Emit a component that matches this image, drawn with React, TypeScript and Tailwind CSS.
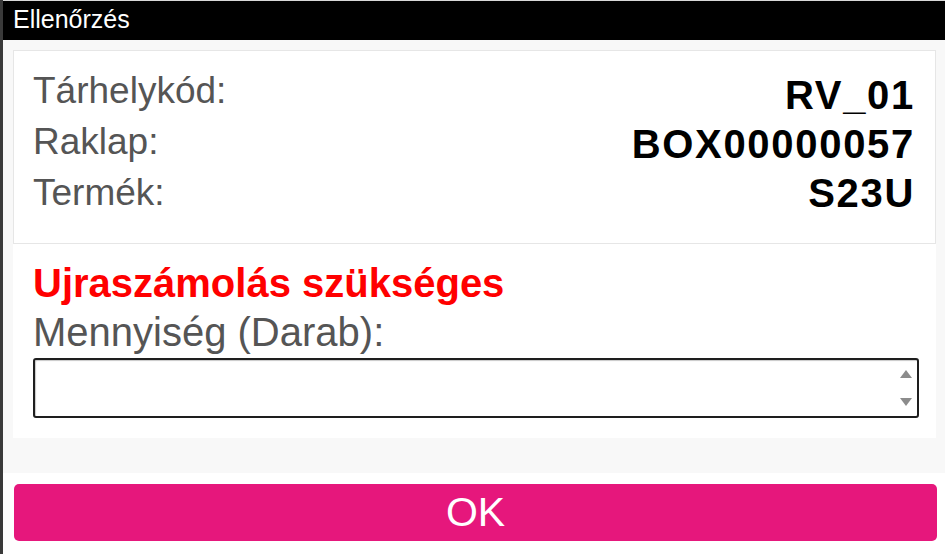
import React from "react";

export default function App() {
  const font = { fontFamily: '"Liberation Sans", Arial, sans-serif' };
  return (
    <div
      className="w-[945px] h-[554px] bg-white flex flex-col border-l-[3px] border-[#3a3a3a] overflow-hidden"
      style={font}
    >
      <div className="h-[1px] bg-[#d8d8d8]" />
      <div className="h-[39px] bg-black text-white pl-[10px] flex items-center text-[25px] leading-none pb-[2px]">
        Ellenőrzés
      </div>
      <div className="bg-[#f8f8f8] pt-[10px] pl-[10px] pr-[9px] pb-[35px] flex flex-col">
        <div className="bg-white border border-[#e6e6e6] flex items-end justify-between pt-[14px] pb-[25px] pl-[19px] pr-[20px]">
          <div className="flex flex-col text-[37px] leading-[51px] text-[#555555]">
            <span>Tárhelykód:</span>
            <span>Raklap:</span>
            <span>Termék:</span>
          </div>
          <div className="flex flex-col items-end text-[40px] leading-[49px] font-bold text-black tracking-[1.7px]">
            <span>RV_01</span>
            <span>BOX00000057</span>
            <span>S23U</span>
          </div>
        </div>
        <div className="bg-white pt-[15px] pb-[20px] pl-[20px] pr-[17px] flex flex-col">
          <div className="text-[40px] leading-[48px] font-bold text-[#ff0000]">
            Ujraszámolás szükséges
          </div>
          <div className="text-[40px] leading-[50px] text-[#555555]">
            Mennyiség (Darab):
          </div>
          <div className="relative mt-[1px] h-[60px] border-2 border-[#1e1e1e] rounded-[3px] bg-white shadow-[inset_1px_1px_1px_#c8c8c8]">
            <input
              type="text"
              className="w-full h-full bg-transparent outline-none px-2 text-[30px]"
              style={font}
            />
            <svg
              className="absolute right-[4px] top-[9px]"
              width="14"
              height="38"
              viewBox="0 0 14 38"
            >
              <polygon points="1,9 13,9 7,1" fill="#8c8c8c" />
              <polygon points="1,29 13,29 7,37" fill="#8c8c8c" />
            </svg>
          </div>
        </div>
      </div>
      <div className="pt-[11px] pl-[11px] pr-[8px]">
        <button className="w-full h-[57px] rounded-[5px] bg-[#e6177c] text-white text-[41px] flex items-center justify-center" style={font}>
          OK
        </button>
      </div>
    </div>
  );
}
